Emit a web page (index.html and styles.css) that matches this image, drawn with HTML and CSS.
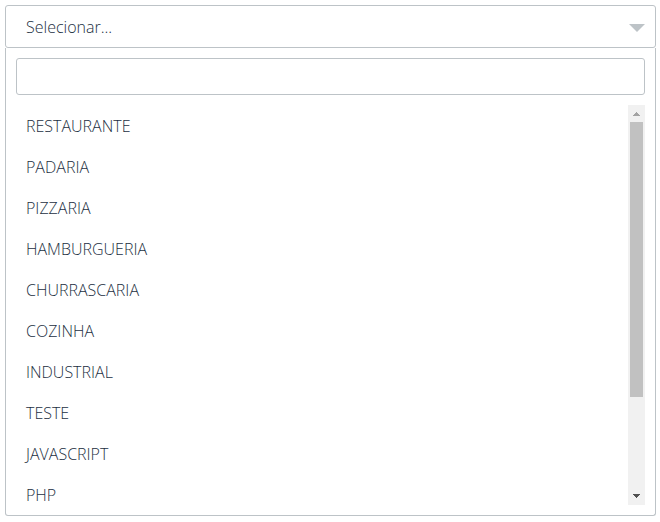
FILE: index.html
```html
<!DOCTYPE html>
<html lang="pt-BR">
<head>
<meta charset="utf-8">
<title>Selecionar</title>
<link rel="stylesheet" href="styles.css">
</head>
<body>
<div class="picker">
  <button class="picker-toggle" type="button" aria-haspopup="listbox" aria-expanded="true" aria-controls="options">
    <span>Selecionar...</span>
    <svg class="caret" viewBox="0 0 16 8" aria-hidden="true"><path d="M0 0h16L8 8z"/></svg>
  </button>
  <div class="picker-panel">
    <input class="picker-search" type="text" aria-labelledby="options">
    <div class="picker-body">
      <ul class="options" id="options" role="listbox" aria-label="Selecionar">
        <li class="option" role="option">RESTAURANTE</li>
        <li class="option" role="option">PADARIA</li>
        <li class="option" role="option">PIZZARIA</li>
        <li class="option" role="option">HAMBURGUERIA</li>
        <li class="option" role="option">CHURRASCARIA</li>
        <li class="option" role="option">COZINHA</li>
        <li class="option" role="option">INDUSTRIAL</li>
        <li class="option" role="option">TESTE</li>
        <li class="option" role="option">JAVASCRIPT</li>
        <li class="option" role="option">PHP</li>
      </ul>
      <div class="scrollbar" aria-hidden="true">
        <svg class="arrow arrow-up" viewBox="0 0 17 17" shape-rendering="crispEdges"><path d="M8 7h1v1h1v1h1v1h1v1H5v-1h1V9h1V8h1z"/></svg>
        <div class="track"><div class="thumb"></div></div>
        <svg class="arrow arrow-down" viewBox="0 0 17 17" shape-rendering="crispEdges"><path d="M5 6h7v1h-1v1h-1v1H9v1H8V9H7V8H6V7H5z"/></svg>
      </div>
    </div>
  </div>
</div>
</body>
</html>
```
FILE: styles.css
```css
* {
  box-sizing: border-box;
}

body {
  margin: 0;
  padding: 5px 4px 5px 5px;
  background: #fff;
  color: #1c2f42;
  font: 300 16px/21px "Segoe UI", "Open Sans", "Noto Sans", sans-serif;
}

.picker-toggle {
  display: flex;
  align-items: center;
  justify-content: space-between;
  width: 100%;
  padding: 11px 10px 9px 20px;
  border: 1px solid #bdc3c7;
  border-radius: 3px;
  background: #fff;
  color: inherit;
  font: inherit;
  cursor: pointer;
}

.caret {
  width: 16px;
  height: 8px;
  fill: #bdc3c7;
}

.picker-panel {
  padding: 10px;
  border: 1px solid #bdc3c7;
  border-top: 0;
  border-radius: 0 0 3px 3px;
}

.picker-search {
  display: block;
  width: 100%;
  padding: 7px 10px;
  border: 1px solid #bdc3c7;
  border-radius: 3px;
  background: #fff;
  color: inherit;
  font: inherit;
}

.picker-body {
  display: flex;
  height: 400px;
  margin-top: 10px;
  overflow: hidden;
}

.options {
  flex: 1;
  margin: 0;
  padding: 0;
  list-style: none;
}

.option {
  padding: 11px 10px 9px;
}

.scrollbar {
  display: flex;
  flex-direction: column;
  width: 17px;
  background: #f1f1f1;
}

.arrow {
  width: 17px;
  height: 17px;
}

.arrow-up {
  fill: #a3a3a3;
}

.arrow-down {
  fill: #505050;
}

.track {
  flex: 1;
  padding: 0 2px;
}

.thumb {
  height: 75%;
  background: #c1c1c1;
}
```
